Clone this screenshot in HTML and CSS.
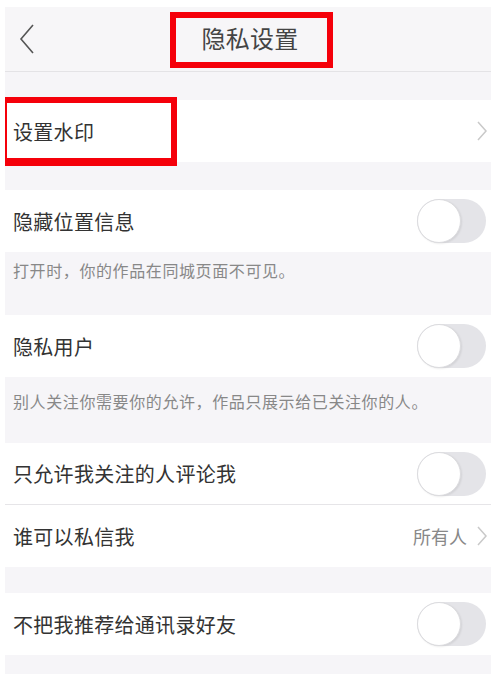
FILE: index.html
```html
<!DOCTYPE html>
<html>
<head>
  <meta charset="utf-8">
  <title>隐私设置</title>
  <link rel="stylesheet" href="styles.css">
</head>
<body>
<div class="screen">
    <!-- Nav bar -->
    <header class="navbar">
        <svg class="back" width="16" height="30" viewBox="0 0 16 30">
            <polyline points="14,1 2,15 14,29" fill="none" stroke="#555" stroke-width="1.6"/>
        </svg>
        <h1 class="title">隐私设置</h1>
    </header>

    <div class="gap"></div>

    <div class="row">
        <span class="label">设置水印</span>
        <svg class="arrow" width="10" height="20" viewBox="0 0 10 20">
            <polyline points="1,1 9,10 1,19" fill="none" stroke="#c9c9c9" stroke-width="1.5"/>
        </svg>
    </div>

    <div class="gap"></div>

    <div class="row">
        <span class="label">隐藏位置信息</span>
        <span class="switch"><span class="knob"></span></span>
    </div>
    <div class="desc">打开时，你的作品在同城页面不可见。</div>

    <div class="row">
        <span class="label">隐私用户</span>
        <span class="switch"><span class="knob"></span></span>
    </div>
    <div class="desc tall">别人关注你需要你的允许，作品只展示给已关注你的人。</div>

    <div class="row line">
        <span class="label">只允许我关注的人评论我</span>
        <span class="switch"><span class="knob"></span></span>
    </div>
    <div class="row">
        <span class="label">谁可以私信我</span>
        <span class="value">所有人</span>
        <svg class="arrow" width="10" height="20" viewBox="0 0 10 20">
            <polyline points="1,1 9,10 1,19" fill="none" stroke="#c9c9c9" stroke-width="1.5"/>
        </svg>
    </div>

    <div class="gap short"></div>

    <div class="row">
        <span class="label">不把我推荐给通讯录好友</span>
        <span class="switch"><span class="knob"></span></span>
    </div>
    <div class="desc"></div>

    <!-- red highlight marks -->
    <div class="mark mark-title"></div>
    <div class="mark mark-watermark"></div>
</div>
</body>
</html>
```

FILE: styles.css
```css
/* General */
body {
    margin: 0;
    padding: 7px 0 0 5px;
    background-color: #fff;
    font-family: "Noto Sans CJK SC", "Noto Sans", sans-serif;
    color: #333;
    overflow: hidden;
}

.screen {
    position: relative;
    overflow: hidden;
    background-color: #f6f5f8;
    height: 667px;
}

/* Nav bar */
.navbar {
    position: relative;
    height: 64px;
    display: flex;
    align-items: center;
    justify-content: center;
    border-bottom: 1px solid #e4e3e6;
    background-color: #f7f6f8;
}

.back {
    position: absolute;
    left: 14px;
    top: 17px;
}

.title {
    margin: 0 0 4px;
    font-size: 24px;
    font-weight: normal;
    color: #444;
    padding-left: 4px;
    letter-spacing: 0.3px;
}

/* Gaps */
.gap {
    height: 28px;
}

.gap.short {
    height: 26px;
}

/* Rows */
.row {
    height: 62px;
    display: flex;
    align-items: center;
    padding: 0 5px 0 8px;
    background-color: #fff;
}

.row.line {
    height: 61px;
    border-bottom: 1px solid #e6e5e8;
}

.label {
    flex: 1;
    font-size: 20px;
    color: #333;
    letter-spacing: 0.3px;
}

.value {
    font-size: 18px;
    color: #888;
    margin-right: 10px;
}

.arrow {
    margin-right: -1px;
}

/* Descriptions */
.desc {
    height: 63px;
    padding: 6px 8px 0;
    box-sizing: border-box;
    font-size: 16px;
    color: #888;
    letter-spacing: 0.6px;
}

.desc.tall {
    height: 66px;
    padding-top: 12px;
}

/* Switch */
.switch {
    position: relative;
    width: 69px;
    height: 44px;
    border-radius: 22px;
    background-color: #e4e4e8;
}

.knob {
    position: absolute;
    left: 0;
    top: 0;
    width: 42px;
    height: 42px;
    border-radius: 50%;
    background-color: #fff;
    border: 1px solid #dcdcdf;
    box-shadow: 1px 1px 2px rgba(0, 0, 0, 0.08);
}

/* Red marks */
.mark {
    position: absolute;
    border: 6px solid #f5000a;
    box-sizing: border-box;
}

.mark-title {
    left: 165px;
    top: 5px;
    width: 163px;
    height: 56px;
}

.mark-watermark {
    left: -4px;
    top: 90px;
    width: 176px;
    height: 69px;
    border-width: 6px 6px 8px 6px;
}
```
